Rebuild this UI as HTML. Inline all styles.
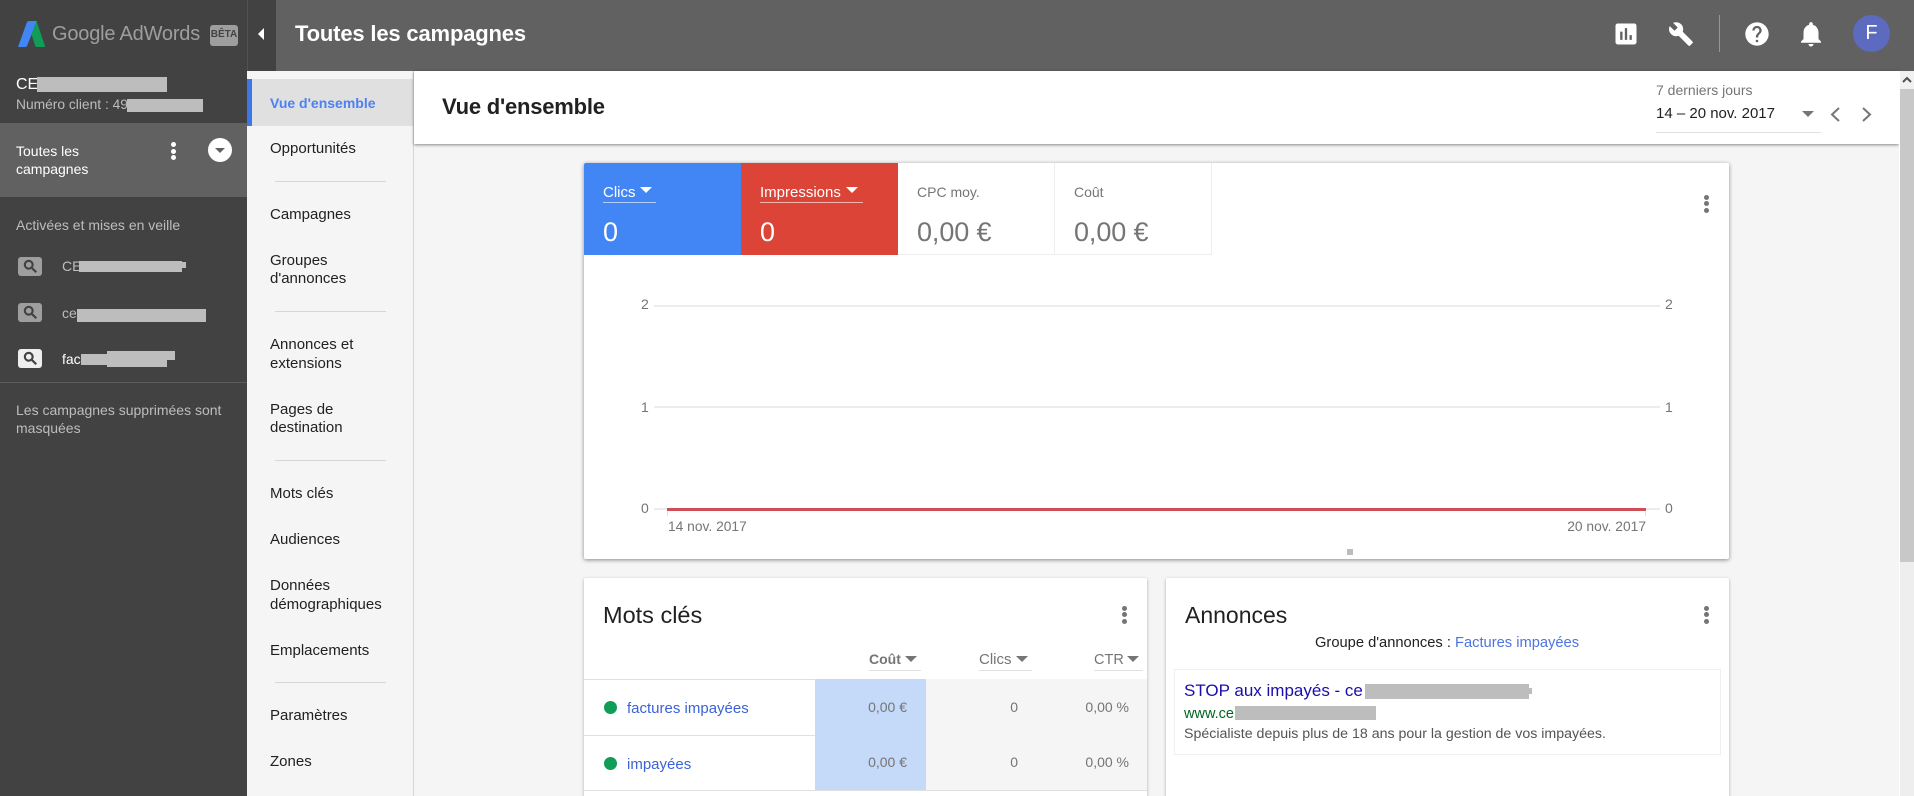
<!DOCTYPE html>
<html lang="fr"><head><meta charset="utf-8"><title>Google AdWords</title>
<style>
html,body{margin:0;padding:0;width:1914px;height:796px;overflow:hidden;background:#f5f5f5}
body{position:relative;font-family:"Liberation Sans",sans-serif;font-size:14px;color:#212121}
div,span.a,svg.a{position:absolute}
.t{position:absolute;white-space:nowrap;line-height:20px;height:20px}
.r{background:#bdbdbd;position:absolute}
.nav{left:270px;color:#212121;font-size:15px;margin-top:0}
.hr{position:absolute;left:275px;width:111px;height:1px;background:#d6d6d6}
.card{position:absolute;background:#fff;border-radius:2px;box-shadow:0 1px 3px rgba(0,0,0,.3)}
.tri{position:absolute;width:0;height:0;border-left:6px solid transparent;border-right:6px solid transparent;border-top:6px solid #fff}
.g{position:absolute;height:2px;background:#ececec}
.lab{color:#757575;font-size:14px}
.v{position:absolute;color:#757575;white-space:nowrap;line-height:20px;text-align:right;width:100px}
a{color:#3b62d8;text-decoration:none}
</style></head><body>

<!-- sidebar -->
<div style="left:0;top:0;width:247px;height:796px;background:#424242"></div>
<svg class="a" style="left:16px;top:19px" width="32" height="30" viewBox="0 0 32 30">
<path d="M2 28 L11 3 Q12 2 14 2 L21 2 L11 27 Q10.500 28 9 28 Z" fill="#4285f4"/>
<path d="M20.500 2 L29 27 Q29.500 28 28 28 L21 28 Q19.500 28 19 26.500 L15.500 15 Z" fill="#0f9d58"/>
</svg>
<span class="t" style="left:52px;top:24px;font-size:20px;color:#9e9e9e;letter-spacing:-.2px">Google AdWords</span>
<div style="left:210px;top:25px;width:28px;height:21px;background:#9e9e9e;border-radius:3px;color:#424242;font-size:10px;font-weight:bold;text-align:center;line-height:20px">BÊTA</div>

<span class="t" style="left:16px;top:75px;font-size:16px;color:#fff">CE</span>
<div class="r" style="left:37px;top:77px;width:130px;height:15px"></div>
<span class="t" style="left:16px;top:95px;font-size:13.800px;color:#bdbdbd">Numéro client : 49</span>
<div class="r" style="left:127px;top:99px;width:76px;height:13px"></div>

<div style="left:0;top:123px;width:247px;height:74px;background:#616161"></div>
<span class="t" style="left:16px;top:141px;color:#fff">Toutes les</span>
<span class="t" style="left:16px;top:159px;color:#fff">campagnes</span>
<div style="left:171px;top:142px;width:5px;height:5px;border-radius:50%;background:#fff"></div>
<div style="left:171px;top:149px;width:5px;height:5px;border-radius:50%;background:#fff"></div>
<div style="left:171px;top:155px;width:5px;height:5px;border-radius:50%;background:#fff"></div>
<div style="left:208px;top:138px;width:24px;height:24px;border-radius:50%;background:#fff"></div>
<div class="tri" style="left:215px;top:148px;border-left-width:5px;border-right-width:5px;border-top:5px solid #616161"></div>

<span class="t" style="left:16px;top:215px;color:#bdbdbd">Activées et mises en veille</span>

<div style="left:18px;top:257px;width:24px;height:19px;background:#9e9e9e;border-radius:3px"></div>
<svg class="a" style="left:22px;top:258px" width="17" height="17" viewBox="0 0 24 24"><path fill="#424242" stroke="#424242" d="M15.500 14h-.79l-.28-.27C15.410 12.590 16 11.110 16 9.500 16 5.910 13.090 3 9.500 3S3 5.910 3 9.500 5.910 16 9.500 16c1.610 0 3.090-.59 4.230-1.570l.27.28v.79l5 4.990L20.490 19l-4.990-5zm-6 0C7.010 14 5 11.990 5 9.500S7.010 5 9.500 5 14 7.010 14 9.500 11.990 14 9.500 14z"/></svg>
<span class="t" style="left:62px;top:256px;color:#bdbdbd">CE</span>
<div class="r" style="left:79px;top:261px;width:103px;height:11px"></div><div class="r" style="left:182px;top:262px;width:4px;height:6px"></div>

<div style="left:18px;top:303px;width:24px;height:19px;background:#9e9e9e;border-radius:3px"></div>
<svg class="a" style="left:22px;top:304px" width="17" height="17" viewBox="0 0 24 24"><path fill="#424242" stroke="#424242" d="M15.500 14h-.79l-.28-.27C15.410 12.590 16 11.110 16 9.500 16 5.910 13.090 3 9.500 3S3 5.910 3 9.500 5.910 16 9.500 16c1.610 0 3.090-.59 4.230-1.570l.27.28v.79l5 4.990L20.490 19l-4.990-5zm-6 0C7.010 14 5 11.990 5 9.500S7.010 5 9.500 5 14 7.010 14 9.500 11.990 14 9.500 14z"/></svg>
<span class="t" style="left:62px;top:303px;color:#bdbdbd">ce</span>
<div class="r" style="left:77px;top:309px;width:129px;height:13px"></div>

<div style="left:18px;top:349px;width:24px;height:19px;background:#eee;border-radius:3px"></div>
<svg class="a" style="left:22px;top:350px" width="17" height="17" viewBox="0 0 24 24"><path fill="#424242" stroke="#424242" d="M15.500 14h-.79l-.28-.27C15.410 12.590 16 11.110 16 9.500 16 5.910 13.090 3 9.500 3S3 5.910 3 9.500 5.910 16 9.500 16c1.610 0 3.090-.59 4.230-1.570l.27.28v.79l5 4.990L20.490 19l-4.990-5zm-6 0C7.010 14 5 11.990 5 9.500S7.010 5 9.500 5 14 7.010 14 9.500 11.990 14 9.500 14z"/></svg>
<span class="t" style="left:62px;top:349px;color:#fff">fac</span>
<div class="r" style="left:81px;top:354px;width:86px;height:11px"></div><div class="r" style="left:107px;top:351px;width:68px;height:9px"></div><div class="r" style="left:107px;top:360px;width:60px;height:7px"></div>

<div style="left:0;top:382px;width:247px;height:1px;background:#5c5c5c"></div>
<span class="t" style="left:16px;top:400px;color:#bdbdbd">Les campagnes supprimées sont</span>
<span class="t" style="left:16px;top:418px;color:#bdbdbd">masquées</span>

<!-- header -->
<div style="left:247px;top:0;width:29px;height:71px;background:#424242"></div>
<div style="left:276px;top:0;width:1638px;height:71px;background:#616161"></div>
<div style="left:247px;top:0;width:1px;height:71px;background:#525252"></div>
<div class="tri" style="left:258px;top:28px;border:0;border-top:6.500px solid transparent;border-bottom:6.500px solid transparent;border-right:6px solid #fff"></div>
<span class="t" style="left:295px;top:24px;font-size:22px;font-weight:bold;color:#fff;letter-spacing:-.17px">Toutes les campagnes</span>

<svg class="a" style="left:1612px;top:20px" width="28" height="28" viewBox="0 0 24 24"><path fill="#fff" d="M19 3H5c-1.100 0-2 .9-2 2v14c0 1.100.9 2 2 2h14c1.100 0 2-.9 2-2V5c0-1.100-.9-2-2-2zM9 17H7v-7h2v7zm4 0h-2V7h2v10zm4 0h-2v-4h2v4z"/></svg>
<svg class="a" style="left:1668px;top:21px" width="26" height="26" viewBox="0 0 24 24"><path fill="#fff" d="M22.700 19l-9.100-9.100c.9-2.300.4-5-1.500-6.900-2-2-5-2.400-7.400-1.300L9 6 6 9 1.600 4.700C.4 7.100.9 10.100 2.900 12.100c1.900 1.900 4.600 2.400 6.900 1.500l9.100 9.100c.4.4 1 .4 1.400 0l2.300-2.300c.5-.4.5-1.100.1-1.400z"/></svg>
<div style="left:1719px;top:15px;width:1px;height:37px;background:#969696"></div>
<svg class="a" style="left:1743px;top:20px" width="28" height="28" viewBox="0 0 24 24"><path fill="#fff" d="M12 2C6.480 2 2 6.480 2 12s4.480 10 10 10 10-4.480 10-10S17.520 2 12 2zm1 17h-2v-2h2v2zm2.070-7.750l-.9.92C13.450 12.900 13 13.500 13 15h-2v-.5c0-1.100.45-2.100 1.170-2.830l1.240-1.260c.37-.36.59-.86.59-1.410 0-1.100-.9-2-2-2s-2 .9-2 2H8c0-2.210 1.790-4 4-4s4 1.790 4 4c0 .88-.36 1.680-.93 2.250z"/></svg>
<svg class="a" style="left:1796px;top:19px" width="30" height="30" viewBox="0 0 24 24"><path fill="#fff" d="M12 22c1.100 0 2-.9 2-2h-4c0 1.100.89 2 2 2zm6-6v-5c0-3.070-1.640-5.640-4.500-6.320V4c0-.83-.67-1.500-1.500-1.500s-1.500.67-1.500 1.500v.68C7.630 5.360 6 7.920 6 11v5l-2 2v1h16v-1l-2-2z"/></svg>
<div style="left:1853px;top:15px;width:37px;height:37px;border-radius:50%;background:#5c6bc0;color:#fff;font-size:20px;line-height:37px;text-align:center">F</div>

<!-- nav -->
<div style="left:247px;top:71px;width:166px;height:725px;background:#f5f5f5"></div>
<div style="left:413px;top:71px;width:1px;height:725px;background:#d6d6d6"></div>
<div style="left:247px;top:79px;width:166px;height:47px;background:#e0e0e0"></div>
<div style="left:247px;top:79px;width:5px;height:47px;background:#3b78e7"></div>
<span class="t nav" style="top:93px;color:#4d80f0;font-weight:bold;font-size:14px">Vue d'ensemble</span>
<span class="t nav" style="top:139px">Opportunités</span>
<div class="hr" style="top:181px"></div>
<span class="t nav" style="top:205px">Campagnes</span>
<span class="t nav" style="top:251px">Groupes</span>
<span class="t nav" style="top:269px">d'annonces</span>
<div class="hr" style="top:311px"></div>
<span class="t nav" style="top:335px">Annonces et</span>
<span class="t nav" style="top:354px">extensions</span>
<span class="t nav" style="top:400px">Pages de</span>
<span class="t nav" style="top:418px">destination</span>
<div class="hr" style="top:460px"></div>
<span class="t nav" style="top:484px">Mots clés</span>
<span class="t nav" style="top:530px">Audiences</span>
<span class="t nav" style="top:576px">Données</span>
<span class="t nav" style="top:595px">démographiques</span>
<span class="t nav" style="top:641px">Emplacements</span>
<div class="hr" style="top:682px"></div>
<span class="t nav" style="top:706px">Paramètres</span>
<span class="t nav" style="top:752px">Zones</span>

<!-- content header -->
<div style="left:414px;top:71px;width:1485px;height:73px;background:#fff;box-shadow:0 1px 3px rgba(0,0,0,.45)"></div>
<span class="t" style="left:442px;top:97px;font-size:22px;font-weight:bold;color:#212121;letter-spacing:-.22px">Vue d'ensemble</span>
<span class="t" style="left:1656px;top:80px;color:#757575">7 derniers jours</span>
<span class="t" style="left:1656px;top:104px;color:#212121;font-size:15px">14 – 20 nov. 2017</span>
<div style="left:1656px;top:132px;width:165px;height:1px;background:#e0e0e0"></div>
<div class="tri" style="left:1802px;top:111px;border-top-color:#757575"></div>
<svg class="a" style="left:1828px;top:105px" width="14" height="18" viewBox="0 0 14 18"><path d="M11 3 L4 9.500 L11 16" fill="none" stroke="#757575" stroke-width="2"/></svg>
<svg class="a" style="left:1860px;top:105px" width="14" height="18" viewBox="0 0 14 18"><path d="M3 3 L10 9.500 L3 16" fill="none" stroke="#757575" stroke-width="2"/></svg>

<!-- scrollbar -->
<div style="left:1899px;top:71px;width:1px;height:725px;background:#fff"></div>
<div style="left:1900px;top:71px;width:14px;height:725px;background:#eee"></div>
<div style="left:1900px;top:71px;width:14px;height:18px;background:#f1f1f1"></div>
<svg class="a" style="left:1901px;top:75px" width="12" height="10" viewBox="0 0 12 10"><path d="M2 7 L6 3 L10 7" fill="none" stroke="#505050" stroke-width="2"/></svg>
<div style="left:1900px;top:89px;width:14px;height:473px;background:#c8c8c8"></div>

<!-- chart card -->
<div class="card" style="left:584px;top:163px;width:1145px;height:396px;box-shadow:0 1px 4px rgba(0,0,0,.45)"></div>
<div style="left:584px;top:163px;width:157px;height:92px;background:#4285f4;border-radius:2px 0 0 0"></div>
<div style="left:741px;top:163px;width:157px;height:92px;background:#db4437"></div>
<div style="left:898px;top:163px;width:156px;height:91px;border-right:1px solid #eee;border-bottom:1px solid #eee"></div>
<div style="left:1055px;top:163px;width:156px;height:91px;border-right:1px solid #eee;border-bottom:1px solid #eee"></div>
<span class="t" style="left:603px;top:183px;color:#fff;font-size:15px">Clics</span>
<div class="tri" style="left:640px;top:187px"></div>
<div style="left:603px;top:202px;width:53px;height:1px;background:#b3cefb"></div>
<span class="t" style="left:760px;top:183px;color:#fff;font-size:15px">Impressions</span>
<div class="tri" style="left:846px;top:187px"></div>
<div style="left:760px;top:202px;width:103px;height:1px;background:#f1b4af"></div>
<span class="t" style="left:917px;top:182px;color:#757575">CPC moy.</span>
<span class="t" style="left:1074px;top:182px;color:#757575">Coût</span>
<span class="t" style="left:603px;top:222px;font-size:27px;color:#fff">0</span>
<span class="t" style="left:760px;top:222px;font-size:27px;color:#fff">0</span>
<span class="t" style="left:917px;top:222px;font-size:27px;color:#757575;letter-spacing:-.1px">0,00 €</span>
<span class="t" style="left:1074px;top:222px;font-size:27px;color:#757575;letter-spacing:-.1px">0,00 €</span>
<div style="left:1704px;top:195px;width:5px;height:5px;border-radius:50%;background:#757575"></div>
<div style="left:1704px;top:201px;width:5px;height:5px;border-radius:50%;background:#757575"></div>
<div style="left:1704px;top:208px;width:5px;height:5px;border-radius:50%;background:#757575"></div>

<div class="g" style="left:654px;top:305px;width:1006px"></div>
<div class="g" style="left:654px;top:406px;width:1006px"></div>
<div class="g" style="left:654px;top:508px;width:1006px"></div>
<div style="left:667px;top:508px;width:979px;height:3px;background:#cf4f58"></div>
<div style="left:667px;top:511px;width:1px;height:5px;background:#e0e0e0"></div>
<div style="left:1645px;top:511px;width:1px;height:5px;background:#e0e0e0"></div>
<span class="t lab" style="left:641px;top:294px">2</span>
<span class="t lab" style="left:641px;top:397px">1</span>
<span class="t lab" style="left:641px;top:498px">0</span>
<span class="t lab" style="left:1665px;top:294px">2</span>
<span class="t lab" style="left:1665px;top:397px">1</span>
<span class="t lab" style="left:1665px;top:498px">0</span>
<span class="t lab" style="left:668px;top:517px;font-size:13.800px">14 nov. 2017</span>
<span class="t lab" style="left:1546px;top:517px;width:100px;text-align:right;font-size:13.800px">20 nov. 2017</span>
<div style="left:1347px;top:549px;width:6px;height:6px;background:#bdbdbd"></div>

<!-- keywords card -->
<div class="card" style="left:584px;top:578px;width:563px;height:230px"></div>
<span class="t" style="left:603px;top:605px;font-size:23.500px;color:#212121">Mots clés</span>
<div style="left:1122px;top:606px;width:5px;height:5px;border-radius:50%;background:#757575"></div>
<div style="left:1122px;top:612px;width:5px;height:5px;border-radius:50%;background:#757575"></div>
<div style="left:1122px;top:619px;width:5px;height:5px;border-radius:50%;background:#757575"></div>
<span class="t" style="left:869px;top:649px;color:#757575;font-weight:bold">Coût</span>
<div class="tri" style="left:905px;top:656px;border-top-color:#757575"></div>
<div style="left:869px;top:670px;width:52px;height:1px;background:#e0e0e0"></div>
<span class="t" style="left:979px;top:650px;color:#757575;font-size:15px">Clics</span>
<div class="tri" style="left:1016px;top:656px;border-top-color:#757575"></div>
<div style="left:979px;top:670px;width:53px;height:1px;background:#e0e0e0"></div>
<span class="t" style="left:1094px;top:650px;color:#757575;font-size:14.500px">CTR</span>
<div class="tri" style="left:1127px;top:656px;border-top-color:#757575"></div>
<div style="left:1094px;top:670px;width:49px;height:1px;background:#e0e0e0"></div>
<div style="left:584px;top:679px;width:563px;height:1px;background:#e0e0e0"></div>
<div style="left:584px;top:735px;width:231px;height:1px;background:#e0e0e0"></div>
<div style="left:815px;top:679px;width:111px;height:111px;background:#c5d9f9"></div>
<div style="left:926px;top:679px;width:221px;height:111px;background:#f5f5f5"></div>
<div style="left:584px;top:790px;width:563px;height:1px;background:#e0e0e0"></div>
<div style="left:604px;top:701px;width:13px;height:13px;border-radius:50%;background:#0f9d58"></div>
<div style="left:604px;top:757px;width:13px;height:13px;border-radius:50%;background:#0f9d58"></div>
<a class="t" style="left:627px;top:699px;font-size:15px" href="#">factures impayées</a>
<a class="t" style="left:627px;top:755px;font-size:15px" href="#">impayées</a>
<span class="v" style="left:807px;top:697px">0,00 €</span>
<span class="v" style="left:918px;top:697px">0</span>
<span class="v" style="left:1029px;top:697px">0,00 %</span>
<span class="v" style="left:807px;top:752px">0,00 €</span>
<span class="v" style="left:918px;top:752px">0</span>
<span class="v" style="left:1029px;top:752px">0,00 %</span>

<!-- ads card -->
<div class="card" style="left:1166px;top:578px;width:563px;height:230px"></div>
<span class="t" style="left:1185px;top:605px;font-size:23px;color:#212121">Annonces</span>
<div style="left:1704px;top:606px;width:5px;height:5px;border-radius:50%;background:#757575"></div>
<div style="left:1704px;top:612px;width:5px;height:5px;border-radius:50%;background:#757575"></div>
<div style="left:1704px;top:619px;width:5px;height:5px;border-radius:50%;background:#757575"></div>
<span class="t" style="left:1315px;top:633px;color:#212121;font-size:14.700px">Groupe d'annonces : <a href="#" style="color:#4d74e0">Factures impayées</a></span>
<div style="left:1174px;top:669px;width:545px;height:84px;border:1px solid #f0f0f0"></div>
<span class="t" style="left:1184px;top:681px;font-size:17px;color:#1a0dab">STOP aux impayés - ce</span>
<div class="r" style="left:1365px;top:684px;width:164px;height:15px"></div>
<div class="r" style="left:1529px;top:688px;width:3px;height:6px"></div>
<span class="t" style="left:1184px;top:704px;color:#006621;font-size:14.500px">www.ce</span>
<div class="r" style="left:1235px;top:706px;width:141px;height:14px"></div>
<span class="t" style="left:1184px;top:724px;font-size:14.200px;color:#545454">Spécialiste depuis plus de 18 ans pour la gestion de vos impayées.</span>
</body></html>
